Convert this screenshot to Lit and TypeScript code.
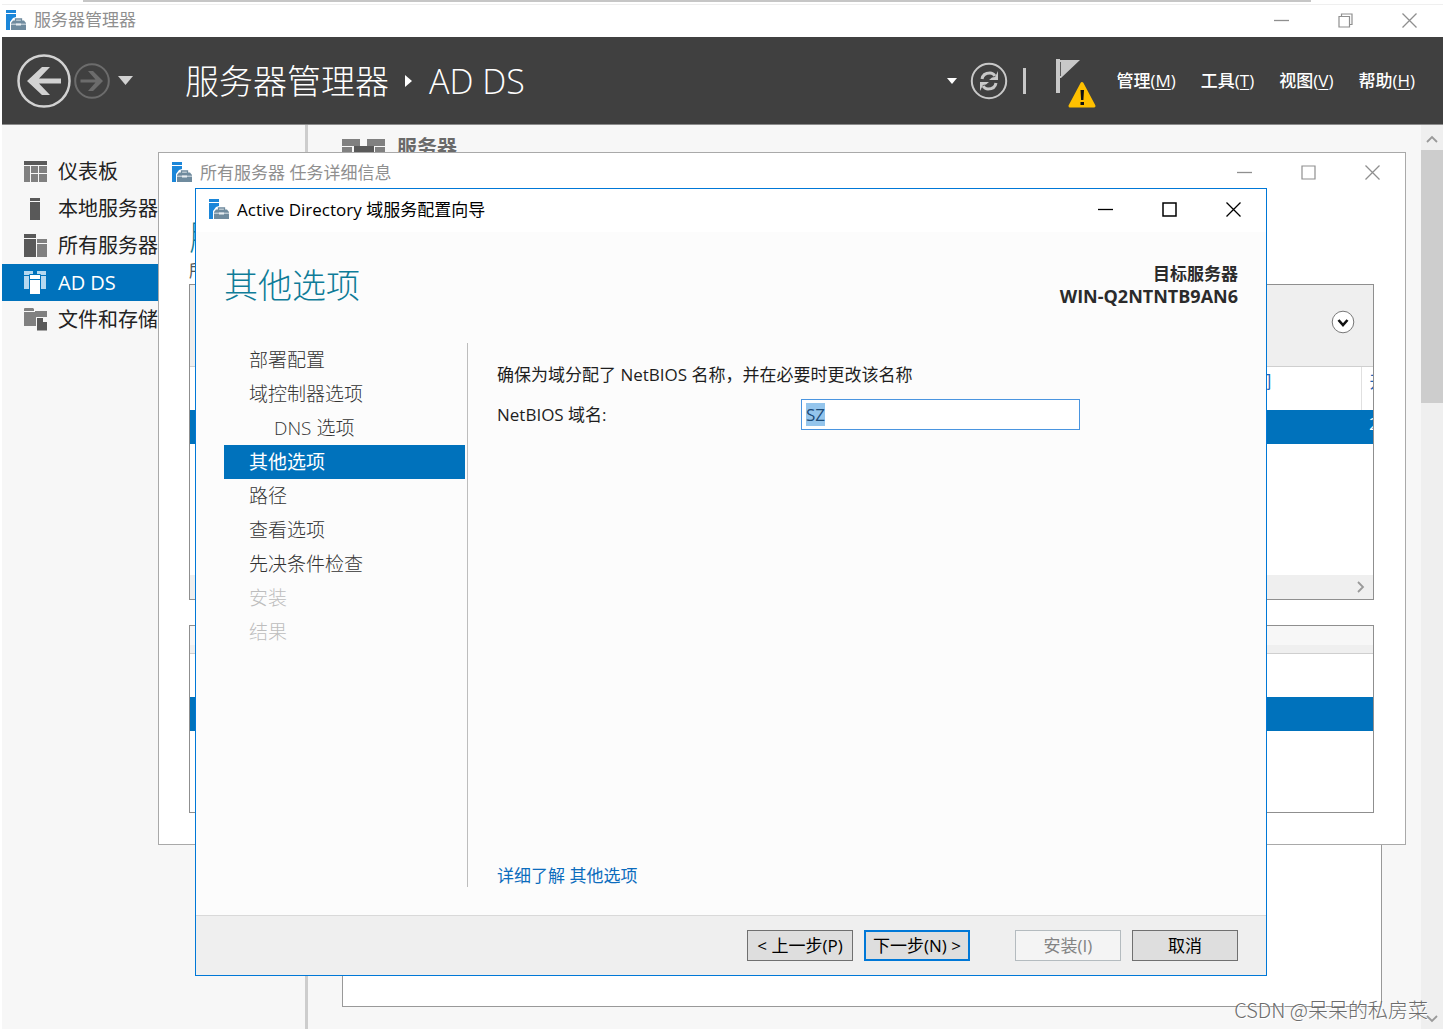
import { LitElement, html, css, svg, nothing } from "lit";
import { customElement, property } from "lit/decorators.js";
import { classMap } from "lit/directives/class-map.js";

const base = css`
  *, *::before, *::after { box-sizing: border-box; }
  :host { box-sizing: border-box; font-family: "Open Sans", "Noto Sans CJK SC", sans-serif; font-size: 17px; line-height: 22px; }
  button { font: inherit; color: inherit; background: none; border: 0; padding: 0; margin: 0; }
  svg { display: block; flex: none; }
  ul, h1, h2, p { margin: 0; padding: 0; list-style: none; font-weight: 400; }
`;

@customElement("window-bar")
class WindowBar extends LitElement {
  @property() caption = "";
  @property({ type: Boolean, reflect: true }) active = false;
  @property({ type: Boolean }) maximized = false;

  static styles = [base, css`
    :host { display: flex; align-items: center; color: #8f8f8f; background: #fff; flex: none; }
    :host([active]) { color: #000; }
    .caption { flex: 1; margin-left: 8px; white-space: nowrap; }
    .control { width: 64px; height: 30px; display: flex; align-items: center; justify-content: center; }
  `];

  render() {
    return html`
      <svg width="21" height="21" viewBox="0 0 21 21" aria-hidden="true">
        <path fill="#1b86d9" d="M1 0h10v3H1zM1 4h10v3L8 8l-3 4v8H1z"/>
        <path fill="none" stroke="#6f8b9e" stroke-width="1.300" d="M10.500 11V9h6v2"/>
        <path fill="#6f8b9e" d="M6 13l2-2.500h11l2 2.500v7H6z"/>
        <path fill="none" stroke="#e8eef2" stroke-width=".9" d="M6 14.200h15"/>
        <path fill="#e8eef2" d="M11 13.500h5v2h-5z"/>
      </svg>
      <span class="caption">${this.caption}</span>
      <button class="control" aria-label="最小化">
        <svg width="15" height="15"><path d="M0 7.500h15" stroke="currentColor" stroke-width="1.300"/></svg>
      </button>
      <button class="control" aria-label="最大化">
        <svg width="15" height="15" fill="none" stroke="currentColor" stroke-width=${this.active ? 1.5 : 1.2}>
          ${this.maximized
            ? svg`<path d="M1 3.500h10.500v10.500H1zM3.500 3.500V1H14v10.500h-2.500"/>`
            : svg`<path d="M1 1h13v13H1z"/>`}
        </svg>
      </button>
      <button class="control" aria-label="关闭">
        <svg width="15" height="15"><path d="M.5.5l14 14M14.500.5l-14 14" stroke="currentColor" stroke-width="1.300"/></svg>
      </button>`;
  }
}

@customElement("config-wizard")
class ConfigWizard extends LitElement {
  static styles = [base, css`
    :host { display: flex; flex-direction: column; background: #fcfcfc; border: 1px solid #0078d7; color: #1e1e1e; }
    window-bar { height: 43px; padding: 0 1px 2px 12px; }
    .top { display: flex; justify-content: space-between; align-items: flex-start; padding: 31px 28px 0 28px; height: 111px; }
    .title { font-size: 34px; line-height: 44px; font-weight: 300; color: #0f7c98; }
    .target { text-align: right; font-weight: 700; line-height: 22px; color: #2b2b2b; }
    .host { font-size: 18px; }
    .middle { flex: 1; display: flex; padding: 0 28px 28px 28px; min-height: 0; }
    .steps { width: 244px; padding-right: 2px; border-right: 1px solid #bdbdbd; flex: none; }
    .step { display: block; width: 100%; height: 34px; padding-left: 25px; text-align: left; font-size: 19px; line-height: 34px; font-weight: 300; color: #333; }
    .step.sub { padding-left: 50px; }
    .step.current { background: #0072bc; color: #fff; font-weight: 400; }
    .step:disabled { color: #bdbdbd; }
    .form { flex: 1; display: flex; flex-direction: column; padding: 21px 0 0 29px; }
    .field { display: flex; align-items: center; margin-top: 13px; }
    .field label { width: 304px; }
    .field input { width: 279px; height: 31px; border: 1px solid #4a95e0; background: #fff; padding: 0 4px; font: inherit; color: #1c4b78; outline: none; caret-color: transparent; }
    .field input::selection { background: #94c5ec; color: #1c4b78; }
    .more { margin-top: auto; color: #0c6cbd; text-decoration: none; }
    .footer { display: flex; justify-content: flex-end; gap: 11px; padding: 14px 28px; border-top: 1px solid #d9d9d9; background: #efefef; }
    .action { width: 106px; height: 31px; border: 1px solid #707070; background: #dedede; color: #000; white-space: nowrap; }
    .action.primary { border: 2px solid #0078d7; margin-right: 34px; }
    .action:disabled { border-color: #b4bbbf; background: #f4f4f4; color: #838383; }
  `];

  private steps = [
    { name: "部署配置" },
    { name: "域控制器选项" },
    { name: "DNS 选项", sub: true },
    { name: "其他选项", current: true },
    { name: "路径" },
    { name: "查看选项" },
    { name: "先决条件检查" },
    { name: "安装", disabled: true },
    { name: "结果", disabled: true },
  ];

  firstUpdated() {
    const input = this.renderRoot.querySelector("input")!;
    input.focus();
    input.select();
  }

  render() {
    return html`
      <window-bar active caption="Active Directory 域服务配置向导"></window-bar>
      <div class="top">
        <h1 class="title">其他选项</h1>
        <div class="target"><div>目标服务器</div><div class="host">WIN-Q2NTNTB9AN6</div></div>
      </div>
      <div class="middle">
        <nav class="steps">
          ${this.steps.map(s => html`<button
            class=${classMap({ step: true, sub: !!s.sub, current: !!s.current })}
            aria-current=${s.current ? "step" : nothing}
            ?disabled=${!!s.disabled}>${s.name}</button>`)}
        </nav>
        <div class="form">
          <p>确保为域分配了 NetBIOS 名称，并在必要时更改该名称</p>
          <div class="field">
            <label for="netbios">NetBIOS 域名:</label>
            <input id="netbios" type="text" .value=${"SZ"}>
          </div>
          <a class="more" href="#more">详细了解 其他选项</a>
        </div>
      </div>
      <div class="footer">
        <button class="action">&lt; 上一步(P)</button>
        <button class="action primary">下一步(N) &gt;</button>
        <button class="action" disabled>安装(I)</button>
        <button class="action">取消</button>
      </div>`;
  }
}

@customElement("task-details")
class TaskDetails extends LitElement {
  static styles = [base, css`
    :host { display: flex; flex-direction: column; background: #fff; border: 1px solid #a9a9a9; }
    window-bar { height: 40px; padding: 0 1px 1px 12px; }
    .body { flex: 1; display: flex; flex-direction: column; padding: 22px 31px 31px 30px; min-height: 0; }
    .title { font-size: 34px; line-height: 44px; font-weight: 300; color: #0f7c98; }
    .note { line-height: 24px; color: #555; padding-bottom: 1px; }
    .panel { border: 1px solid #8f8f8f; overflow: hidden; display: flex; flex-direction: column; }
    .tasks { flex: 1; }
    .results { height: 188px; margin-top: 25px; }
    .tools { height: 82px; flex: none; background: #efefef; border-bottom: 1px solid #cfcfcf; display: flex; align-items: center; justify-content: flex-end; padding: 0 18px 8px 0; }
    .strip { height: 28px; flex: none; background: #efefef; border-top: 19px solid #f7f7f7; border-bottom: 1px solid #cfcfcf; }
    .grid { width: 100%; table-layout: fixed; border-collapse: collapse; }
    .grid th, .grid td { padding: 0; white-space: nowrap; font-weight: 400; overflow: hidden; }
    .grid th { height: 43px; color: #2067b8; text-align: right; vertical-align: top; line-height: 30px; }
    .grid td { height: 34px; background: #0072bc; color: #fff; line-height: 28px; vertical-align: top; }
    .grid .time { padding-right: 89px; }
    .grid .last { width: 12px; padding-left: 8px; text-align: left; }
    .grid th.last { border-left: 1px solid #e0e0e0; }
    .hscroll { height: 24px; margin-top: auto; background: #efefef; display: flex; align-items: center; justify-content: flex-end; padding-right: 8px; }
  `];

  render() {
    return html`
      <window-bar caption="所有服务器 任务详细信息"></window-bar>
      <div class="body">
        <h2 class="title">服</h2>
        <p class="note">所</p>
        <section class="panel tasks">
          <div class="tools">
            <button aria-label="展开">
              <svg width="24" height="24"><circle cx="12" cy="12" r="10.800" fill="#fff" stroke="#777"/><path d="M7.500 10l4.500 5 4.500-5" fill="none" stroke="#111" stroke-width="2.600"/></svg>
            </button>
          </div>
          <table class="grid">
            <thead><tr><th class="time">间</th><th class="last">开</th></tr></thead>
            <tbody><tr><td></td><td class="last">2</td></tr></tbody>
          </table>
          <div class="hscroll">
            <svg width="9" height="12"><path d="M2 1l5 5-5 5" fill="none" stroke="#999" stroke-width="1.800"/></svg>
          </div>
        </section>
        <section class="panel results">
          <div class="strip"></div>
          <table class="grid">
            <thead><tr><th></th></tr></thead>
            <tbody><tr><td></td></tr></tbody>
          </table>
        </section>
      </div>`;
  }
}

const navIcons = {
  dashboard: svg`<path fill="#595959" d="M0 1h23v4H0z"/><path fill="#808080" d="M0 6h6v16H0zM7 6h7v7H7zM15 6h8v7h-8zM7 14h7v8H7zM15 14h8v8h-8z"/>`,
  local: svg`<path fill="#595959" d="M6 1h10v3H6zM6 5h10v18H6z"/>`,
  all: svg`<path fill="#595959" d="M0 0h12v4H0zM0 5h12v18H0z"/><path fill="#808080" d="M13 5h10v4H13zM13 10h10v13H13z"/>`,
  adds: svg`<path fill="#b5d8f0" d="M0 0h9v4H5v14H0zM13 0h9v18h-5V4h-4z"/><path stroke="#0072bc" d="M0 4.500h22"/><path fill="#fff" stroke="#0072bc" d="M5.500 3.500h11v20h-11z"/><path stroke="#0072bc" d="M6 8.500h10"/>`,
  files: svg`<path fill="#808080" d="M0 1q0-1 1-1h8l1 1v2H0zM0 4h11V3h12v6H12v9H0z"/><path fill="#595959" stroke="#f7f7f7" d="M12.500 9.500h7l4 4v9.500h-11z"/><path fill="#f7f7f7" d="M19 9v5h5z"/>`,
};

@customElement("app-root")
class AppRoot extends LitElement {
  static styles = [base, css`
    :host { display: flex; flex-direction: column; position: relative; height: 100vh; overflow: hidden; background: #fff; padding-left: 2px; }
    .edge { height: 5px; flex: none; border-bottom: 1px solid #efefef; }
    .edge::before { content: ""; display: block; height: 2px; margin: 0 132px 0 81px; background: #c6c6c6; }
    .main-bar { height: 32px; padding: 0 2px 2px 3px; }
    .header { height: 88px; flex: none; display: flex; align-items: center; background: #404040; color: #fff; border-bottom: 1px solid #8c8c8c; padding: 0 28px 0 15px; }
    .crumbs { display: flex; align-items: center; gap: 16px; margin-left: 51px; font-size: 34px; line-height: 44px; font-weight: 300; white-space: nowrap; }
    .tools { display: flex; align-items: center; margin-left: auto; }
    .refresh { margin: 0 15px 0 13px; }
    .flag { margin: 6px 20px 0 28px; }
    .menu { display: flex; gap: 25px; font-weight: 500; white-space: nowrap; }
    .menu u { text-underline-offset: 2px; }
    .below { flex: 1; display: flex; min-height: 0; background: #f7f7f7; }
    .side { width: 306px; flex: none; border-right: 3px solid #cdcdcd; padding-top: 28px; }
    .item { display: flex; align-items: center; gap: 11px; height: 37px; padding-left: 22px; font-size: 20px; line-height: 28px; color: #222; text-decoration: none; white-space: nowrap; }
    .item.current { background: #0072bc; color: #fff; }
    .content { flex: 1; display: flex; flex-direction: column; padding: 9px 39px 22px 34px; }
    .group { display: flex; align-items: center; gap: 12px; font-size: 20px; line-height: 28px; font-weight: 700; color: #6a6a6a; }
    .sheet { flex: 1; margin-top: 20px; background: #fff; border: 1px solid #999; }
    .scroll { width: 22px; flex: none; display: flex; flex-direction: column; align-items: center; background: #efefef; }
    .scroll .up { height: 25px; padding-top: 9px; }
    .thumb { width: 100%; height: 253px; background: #cdcdcd; }
    .scroll .down { margin-top: auto; padding-bottom: 6px; }
    task-details { position: absolute; inset: 152px 37px 184px 158px; }
    config-wizard { position: absolute; inset: 188px 176px 53px 195px; }
    .watermark { position: absolute; right: 15px; bottom: 5px; font-family: "Noto Sans CJK SC", sans-serif; font-size: 20px; line-height: 28px; font-weight: 300; color: #6c6c6c; text-shadow: 1px 1px 0 #fff; white-space: nowrap; }
  `];

  private items = [
    { name: "仪表板", icon: navIcons.dashboard },
    { name: "本地服务器", icon: navIcons.local },
    { name: "所有服务器", icon: navIcons.all },
    { name: "AD DS", icon: navIcons.adds, current: true },
    { name: "文件和存储服务", icon: navIcons.files },
  ];

  private menus = [["管理", "M"], ["工具", "T"], ["视图", "V"], ["帮助", "H"]];

  render() {
    return html`
      <div class="edge"></div>
      <window-bar class="main-bar" maximized caption="服务器管理器"></window-bar>
      <header class="header">
        <button aria-label="后退">
          <svg width="54" height="54" fill="none" stroke="#d2d2d2"><circle cx="27" cy="27" r="25.500" stroke-width="2.500"/><path fill="#d2d2d2" stroke="none" d="M10 27l15-14h8L22 24.500h22v5H22L33 41h-8z"/></svg>
        </button>
        <button aria-label="前进">
          <svg width="42" height="40" fill="none" stroke="#6c6c6c"><circle cx="21" cy="20" r="16.800" stroke-width="2"/><path fill="#6c6c6c" stroke="none" d="M32 20l-10-10h-5l7.500 8.500H9.500v3h15L17 30h5z"/></svg>
        </button>
        <button aria-label="历史记录">
          <svg width="21" height="12"><path fill="#d2d2d2" d="M5 1h15l-7.500 9z"/></svg>
        </button>
        <div class="crumbs">
          <span>服务器管理器</span>
          <svg width="8" height="12"><path fill="#fff" d="M0 0v12l7-6z"/></svg>
          <span>AD DS</span>
        </div>
        <div class="tools">
          <button aria-label="通知列表"><svg width="10" height="6"><path fill="#fff" d="M0 0h10L5 6z"/></svg></button>
          <button class="refresh" aria-label="刷新">
            <svg width="38" height="38" viewBox="0 0 38 38" fill="none" stroke="#c8c8c8"><circle cx="19" cy="19" r="17.200" stroke-width="2"/><path stroke-width="3" d="M12 17q1-6 8-6 3 0 5 3M26 21q-1 6-8 6-3 0-5-3"/><path fill="#c8c8c8" stroke="none" d="M28 9v9h-9l3-2.500 3-.5zM10 29v-9h9l-3 2.500-3 .5z"/></svg>
          </button>
          <svg width="4" height="26"><path fill="#c8c8c8" d="M0 0h3v26H0z"/></svg>
          <button class="flag" aria-label="通知">
            <svg width="42" height="52" viewBox="0 0 42 52"><path fill="#c8c8c8" d="M1 1h4v34H1zM4 2h21L6 20H4z"/><path stroke="#404040" stroke-width=".8" d="M5.500 4v14"/><path fill="#ffc000" stroke="#ffc000" stroke-width="3" stroke-linejoin="round" d="M27 25.500L39 48H15z"/><path fill="#111" d="M25.500 32h3.500l-.6 10h-2.300zM25.500 44h3.500v3h-3.500z"/></svg>
          </button>
          <nav class="menu">
            ${this.menus.map(([name, key]) => html`<button>${name}(<u>${key}</u>)</button>`)}
          </nav>
        </div>
      </header>
      <div class="below">
        <nav class="side">
          ${this.items.map(i => html`<a href="#" class=${classMap({ item: true, current: !!i.current })}>
            <svg width="23" height="23" aria-hidden="true">${i.icon}</svg><span>${i.name}</span></a>`)}
        </nav>
        <main class="content">
          <h2 class="group">
            <svg width="43" height="24"><path fill="#808080" d="M0 3h18v7H0zM25 3h18v7H25zM0 11h10v13H0zM33 11h10v13H33z"/><path fill="#595959" d="M12 10h20v14H12z"/></svg>
            服务器
          </h2>
          <div class="sheet"></div>
        </main>
        <div class="scroll">
          <div class="up"><svg width="12" height="10"><path d="M1 8l5-5 5 5" fill="none" stroke="#999" stroke-width="1.800"/></svg></div>
          <div class="thumb"></div>
          <div class="down"><svg width="12" height="8"><path d="M1 1l5 5 5-5" fill="none" stroke="#999" stroke-width="1.800"/></svg></div>
        </div>
      </div>
      <task-details></task-details>
      <config-wizard></config-wizard>
      <div class="watermark">CSDN @呆呆的私房菜</div>`;
  }
}
